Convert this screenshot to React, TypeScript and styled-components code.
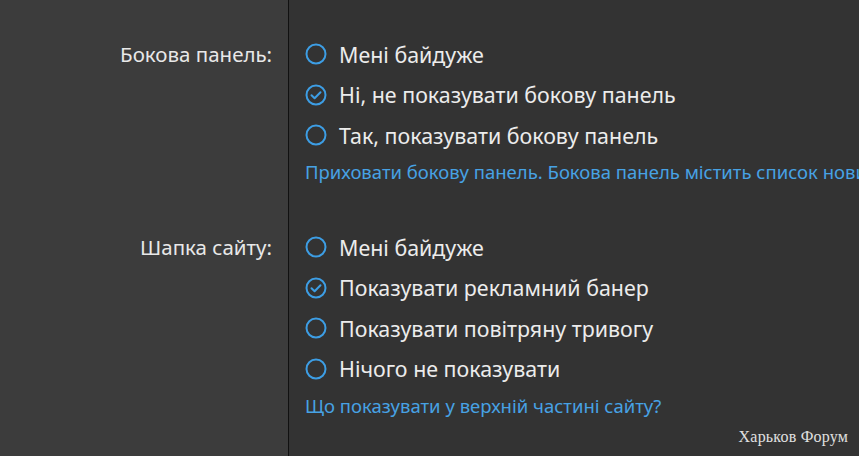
import styled, { createGlobalStyle } from "styled-components";

const GlobalStyle = createGlobalStyle`
  html, body {
    margin: 0;
    padding: 0;
    background: #333333;
    overflow: hidden;
  }
  body {
    font-family: "Noto Sans", "Open Sans", sans-serif;
  }
`;

const Page = styled.div`
  display: flex;
  flex-direction: column;
  min-height: 100vh;
  position: relative;
`;

const Section = styled.div<{ $grow?: boolean }>`
  display: grid;
  grid-template-columns: 289px 1fr;
  flex: ${(p) => (p.$grow ? 1 : "none")};
`;

const LabelCell = styled.div<{ $top: number }>`
  background: #3c3c3c;
  border-right: 1px solid #111;
  text-align: right;
  padding: ${(p) => p.$top}px 16px 0 0;
  color: #e8e8e8;
  font-size: 20.5px;
  line-height: 40px;
`;

const Options = styled.div<{ $top: number; $bottom: number }>`
  padding: ${(p) => p.$top}px 0 ${(p) => p.$bottom}px 16px;
  display: flex;
  flex-direction: column;
  white-space: nowrap;
  overflow: hidden;
`;

const Option = styled.label`
  display: flex;
  align-items: center;
  gap: 12px;
  height: 40.5px;
  color: #ececec;
  font-size: 21.4px;
`;

const Hint = styled.div`
  color: #47a2e4;
  font-size: 18.5px;
  line-height: 24px;
  margin-top: 4.5px;
`;

const Watermark = styled.div`
  position: absolute;
  right: 11px;
  bottom: 10px;
  font-family: "Liberation Serif", "DejaVu Serif", serif;
  font-size: 16px;
  color: #e0e0e0;
  letter-spacing: 0.2px;
`;

const Radio = ({ checked }: { checked?: boolean }) => (
  <svg width="22" height="22" viewBox="0 0 22 22" fill="none">
    <circle cx="11" cy="11" r="9.5" stroke="#3d9ee5" strokeWidth="2" />
    {checked && (
      <path
        d="M6.5 11.2 L9.6 14.2 L15.5 8.2"
        stroke="#3d9ee5"
        strokeWidth="2"
        strokeLinecap="round"
        strokeLinejoin="round"
      />
    )}
  </svg>
);

type Group = {
  label: string;
  options: string[];
  checked: number;
  hint: string;
};

const groups: Group[] = [
  {
    label: "Бокова панель:",
    options: [
      "Мені байдуже",
      "Ні, не показувати бокову панель",
      "Так, показувати бокову панель",
    ],
    checked: 1,
    hint: "Приховати бокову панель. Бокова панель містить список нових повідомлень та інші блоки",
  },
  {
    label: "Шапка сайту:",
    options: [
      "Мені байдуже",
      "Показувати рекламний банер",
      "Показувати повітряну тривогу",
      "Нічого не показувати",
    ],
    checked: 1,
    hint: "Що показувати у верхній частині сайту?",
  },
];

const App = () => {
  return (
    <Page>
      <GlobalStyle />
      {groups.map((g, i) => (
        <Section key={g.label} $grow={i === groups.length - 1}>
          <LabelCell $top={i === 0 ? 34 : 24}>{g.label}</LabelCell>
          <Options $top={i === 0 ? 34 : 24} $bottom={i === 0 ? 19 : 0}>
            {g.options.map((o, j) => (
              <Option key={o}>
                <Radio checked={j === g.checked} />
                {o}
              </Option>
            ))}
            <Hint>{g.hint}</Hint>
          </Options>
        </Section>
      ))}
      <Watermark>Харьков Форум</Watermark>
    </Page>
  );
};

export default App;
